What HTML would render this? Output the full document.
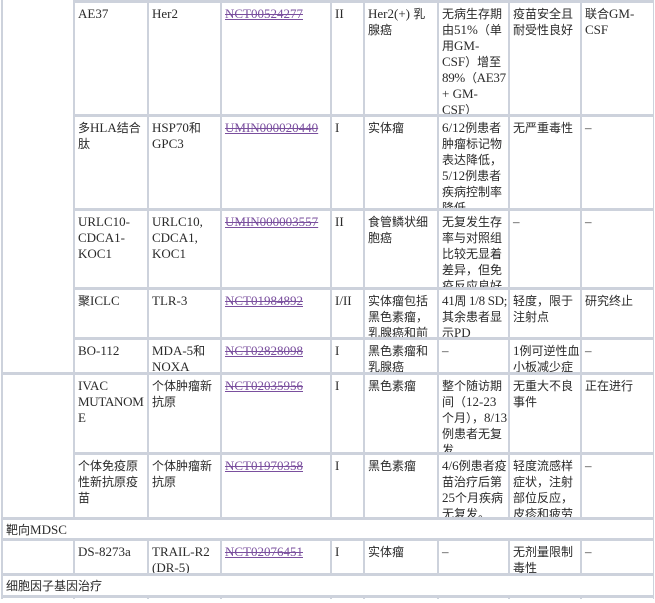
<!DOCTYPE html>
<html><head><meta charset="utf-8"><style>
html,body{margin:0;padding:0;width:655px;height:599px;overflow:hidden;background:#fff}
#t{position:absolute;left:1px;top:0;width:653px;height:599px;background:#cdd2dc}
.c{position:absolute;background:#fff;overflow:hidden;box-sizing:border-box;padding:3px 0 0 3px;font:13px/16px "Liberation Serif","Noto Sans CJK SC",serif;color:#2a2a2a;overflow-wrap:anywhere}
.c i{font-style:normal;font-size:12px;font-family:"Noto Sans CJK SC",sans-serif}
.n{letter-spacing:-0.3px;white-space:nowrap}
.l{color:#7a4f9e;text-decoration:underline line-through;text-decoration-thickness:1px}
</style></head><body>
<div id="t"></div>
<div class="c" style="left:3px;top:0;width:70px;height:372px"></div>
<div class="c" style="left:75px;top:3px;width:72px;height:111px">AE37</div>
<div class="c" style="left:149px;top:3px;width:71px;height:111px">Her2</div>
<div class="c" style="left:222px;top:3px;width:108px;height:111px"><span class="l">NCT00524277</span></div>
<div class="c" style="left:332px;top:3px;width:31px;height:111px">II</div>
<div class="c" style="left:365px;top:3px;width:72px;height:111px">Her2(+) <i>乳腺癌</i></div>
<div class="c" style="left:439px;top:3px;width:69px;height:111px"><i>无病生存期由</i>51%<i>（单用</i>GM-CSF<i>）增至</i><span class="n">89%<i>（</i>AE37</span> + GM-CSF<i>）</i></div>
<div class="c" style="left:510px;top:3px;width:70px;height:111px"><i>疫苗安全且耐受性良好</i></div>
<div class="c" style="left:582px;top:3px;width:71px;height:111px"><i>联合</i>GM-CSF</div>
<div class="c" style="left:75px;top:117px;width:72px;height:91px"><i>多</i>HLA<i>结合肽</i></div>
<div class="c" style="left:149px;top:117px;width:71px;height:91px">HSP70<i>和</i> GPC3</div>
<div class="c" style="left:222px;top:117px;width:108px;height:91px"><span class="l">UMIN000020440</span></div>
<div class="c" style="left:332px;top:117px;width:31px;height:91px">I</div>
<div class="c" style="left:365px;top:117px;width:72px;height:91px"><i>实体瘤</i></div>
<div class="c" style="left:439px;top:117px;width:69px;height:91px">6/12<i>例患者肿瘤标记物表达降低，</i>5/12<i>例患者疾病控制率降低</i></div>
<div class="c" style="left:510px;top:117px;width:70px;height:91px"><i>无严重毒性</i></div>
<div class="c" style="left:582px;top:117px;width:71px;height:91px">–</div>
<div class="c" style="left:75px;top:211px;width:72px;height:76px">URLC10-<br>CDCA1-<br>KOC1</div>
<div class="c" style="left:149px;top:211px;width:71px;height:76px">URLC10,<br>CDCA1,<br>KOC1</div>
<div class="c" style="left:222px;top:211px;width:108px;height:76px"><span class="l">UMIN000003557</span></div>
<div class="c" style="left:332px;top:211px;width:31px;height:76px">II</div>
<div class="c" style="left:365px;top:211px;width:72px;height:76px"><i>食管鳞状细胞癌</i></div>
<div class="c" style="left:439px;top:211px;width:69px;height:76px"><i>无复发生存率与对照组比较无显着差异，但免疫反应良好</i></div>
<div class="c" style="left:510px;top:211px;width:70px;height:76px">–</div>
<div class="c" style="left:582px;top:211px;width:71px;height:76px">–</div>
<div class="c" style="left:75px;top:290px;width:72px;height:47px"><i>聚</i>ICLC</div>
<div class="c" style="left:149px;top:290px;width:71px;height:47px">TLR-3</div>
<div class="c" style="left:222px;top:290px;width:108px;height:47px"><span class="l">NCT01984892</span></div>
<div class="c" style="left:332px;top:290px;width:31px;height:47px">I/II</div>
<div class="c" style="left:365px;top:290px;width:72px;height:47px"><i>实体瘤包括黑色素瘤，乳腺癌和前列腺癌</i></div>
<div class="c" style="left:439px;top:290px;width:69px;height:47px"><span class="n">41<i>周</i> 1/8 SD;</span><i>其余患者显示</i>PD</div>
<div class="c" style="left:510px;top:290px;width:70px;height:47px"><i>轻度，限于注射点</i></div>
<div class="c" style="left:582px;top:290px;width:71px;height:47px"><i>研究终止</i></div>
<div class="c" style="left:75px;top:340px;width:72px;height:32px">BO-112</div>
<div class="c" style="left:149px;top:340px;width:71px;height:32px">MDA-5<i>和</i> NOXA</div>
<div class="c" style="left:222px;top:340px;width:108px;height:32px"><span class="l">NCT02828098</span></div>
<div class="c" style="left:332px;top:340px;width:31px;height:32px">I</div>
<div class="c" style="left:365px;top:340px;width:72px;height:32px"><i>黑色素瘤和乳腺癌</i></div>
<div class="c" style="left:439px;top:340px;width:69px;height:32px">–</div>
<div class="c" style="left:510px;top:340px;width:70px;height:32px">1<i>例可逆性血小板减少症</i></div>
<div class="c" style="left:582px;top:340px;width:71px;height:32px">–</div>
<div class="c" style="left:3px;top:375px;width:70px;height:142px"></div>
<div class="c" style="left:75px;top:375px;width:72px;height:77px">IVAC<br><span class="n">MUTANOM</span><br>E</div>
<div class="c" style="left:149px;top:375px;width:71px;height:77px"><i>个体肿瘤新抗原</i></div>
<div class="c" style="left:222px;top:375px;width:108px;height:77px"><span class="l">NCT02035956</span></div>
<div class="c" style="left:332px;top:375px;width:31px;height:77px">I</div>
<div class="c" style="left:365px;top:375px;width:72px;height:77px"><i>黑色素瘤</i></div>
<div class="c" style="left:439px;top:375px;width:69px;height:77px"><i>整个随访期间（</i>12-23<i>个月），</i>8/13<i>例患者无复发</i></div>
<div class="c" style="left:510px;top:375px;width:70px;height:77px"><i>无重大不良事件</i></div>
<div class="c" style="left:582px;top:375px;width:71px;height:77px"><i>正在进行</i></div>
<div class="c" style="left:75px;top:455px;width:72px;height:62px"><i>个体免疫原性新抗原疫苗</i></div>
<div class="c" style="left:149px;top:455px;width:71px;height:62px"><i>个体肿瘤新抗原</i></div>
<div class="c" style="left:222px;top:455px;width:108px;height:62px"><span class="l">NCT01970358</span></div>
<div class="c" style="left:332px;top:455px;width:31px;height:62px">I</div>
<div class="c" style="left:365px;top:455px;width:72px;height:62px"><i>黑色素瘤</i></div>
<div class="c" style="left:439px;top:455px;width:69px;height:62px">4/6<i>例患者疫苗治疗后第</i>25<i>个月疾病无复发。</i></div>
<div class="c" style="left:510px;top:455px;width:70px;height:62px"><i>轻度流感样症状，注射部位反应，皮疹和疲劳</i></div>
<div class="c" style="left:582px;top:455px;width:71px;height:62px">–</div>
<div class="c" style="left:3px;top:520px;width:650px;height:18px;padding-top:2px"><i>靶向</i>MDSC</div>
<div class="c" style="left:3px;top:541px;width:70px;height:32px"></div>
<div class="c" style="left:75px;top:541px;width:72px;height:32px">DS-8273a</div>
<div class="c" style="left:149px;top:541px;width:71px;height:32px">TRAIL-R2 (DR-5)</div>
<div class="c" style="left:222px;top:541px;width:108px;height:32px"><span class="l">NCT02076451</span></div>
<div class="c" style="left:332px;top:541px;width:31px;height:32px">I</div>
<div class="c" style="left:365px;top:541px;width:72px;height:32px"><i>实体瘤</i></div>
<div class="c" style="left:439px;top:541px;width:69px;height:32px">–</div>
<div class="c" style="left:510px;top:541px;width:70px;height:32px"><i>无剂量限制毒性</i></div>
<div class="c" style="left:582px;top:541px;width:71px;height:32px">–</div>
<div class="c" style="left:3px;top:576px;width:650px;height:19px;padding-top:2px"><i>细胞因子基因治疗</i></div>
<div class="c" style="left:3px;top:598px;width:70px;height:5px"></div>
<div class="c" style="left:75px;top:598px;width:72px;height:5px"></div>
<div class="c" style="left:149px;top:598px;width:71px;height:5px"></div>
<div class="c" style="left:222px;top:598px;width:108px;height:5px"></div>
<div class="c" style="left:332px;top:598px;width:31px;height:5px"></div>
<div class="c" style="left:365px;top:598px;width:72px;height:5px"></div>
<div class="c" style="left:439px;top:598px;width:69px;height:5px"></div>
<div class="c" style="left:510px;top:598px;width:70px;height:5px"></div>
<div class="c" style="left:582px;top:598px;width:71px;height:5px"></div>
</body></html>
